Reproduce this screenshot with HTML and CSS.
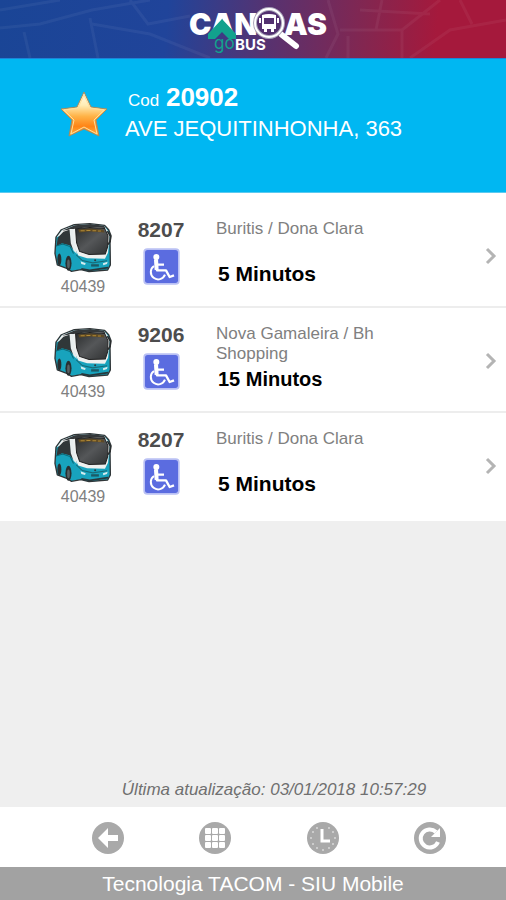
FILE: index.html
```
<!DOCTYPE html>
<html lang="pt-BR">
<head>
<meta charset="utf-8">
<meta name="viewport" content="width=device-width, initial-scale=1">
<title>Canoas goBus</title>
<link rel="stylesheet" href="styles.css">
</head>
<body>
<svg class="defs" aria-hidden="true">
  <defs>
    <linearGradient id="glass" x1="0" y1="0" x2="1" y2="1">
      <stop offset="0" stop-color="#292b2c"/>
      <stop offset=".5" stop-color="#555759"/>
      <stop offset="1" stop-color="#303233"/>
    </linearGradient>
    <symbol id="bus" viewBox="0 0 168 148">
      <path d="M4 42 20 20 58 5 104 2 148 7 160 20 167 38 164 58 165 124 157 139 102 144 78 138 50 143 36 134 8 124 1 90Z" fill="#18a3bd" stroke="#303638" stroke-width="4" stroke-linejoin="round"/>
      <path d="M6 42 22 21 60 7 104 4 147 9 157 22 163 40 161 60 158 88 149 106 96 104 70 96 58 70 52 28 24 34Z" fill="#eef0ef"/>
      <path d="M9 44 26 26 50 18 52 58 60 84 44 66 22 60 6 68Z" fill="#303739"/>
      <path d="M22 23 60 7 106 3 146 8 151 15 104 12 61 17Z" fill="#34383a"/>
      <path d="M44 18 54 18 58 58 66 92 56 82 48 60Z" fill="#e9eeee"/>
      <path d="M62 17 104 13 148 16 158 38 157 70 150 92 102 93 74 84 65 58Z" fill="url(#glass)" stroke="#222" stroke-width="3"/>
      <path d="M70 19 104 16 145 20 148 28 104 25 73 28Z" fill="#5d4925"/>
      <path d="M77 23h12m5-1h12m6 1h11m5 1h9" stroke="#b28a36" stroke-width="3"/>
      <path d="M64 94 82 111 113 118 155 112" fill="none" stroke="#176b79" stroke-width="3"/>
      <path d="M156 24 165 39 164 55 158 64" fill="none" stroke="#292d2e" stroke-width="5"/>
      <path d="M4 68 24 62 46 70 56 90" fill="none" stroke="#0b6978" stroke-width="3"/>
      <ellipse cx="41" cy="119" rx="9" ry="22" fill="#292f31"/>
      <ellipse cx="41" cy="121" rx="4" ry="13" fill="#596164"/>
      <ellipse cx="14" cy="108" rx="6" ry="18" fill="#292f31"/>
      <path d="M77 113 92 119 90 124 79 121ZM143 119 157 115 155 121 144 125Z" fill="#d6ecee"/>
      <path d="M108 122h23v7h-23z" fill="#1b5965"/>
      <path d="M79 136 104 140 158 132" fill="none" stroke="#28383c" stroke-width="5"/>
      <circle cx="120" cy="110" r="3" fill="#30393b"/>
    </symbol>
    <symbol id="wheelchair" viewBox="0 0 111 111">
      <rect x="1" y="1" width="109" height="109" rx="12" fill="#b9c0f4"/>
      <rect x="6" y="6" width="99" height="99" rx="8" fill="#5b6ce0"/>
      <circle cx="40" cy="27" r="9" fill="#fff"/>
      <path d="M39 34 42 67H69L80 87 93 82M41 50H63" fill="none" stroke="#fff" stroke-width="7" stroke-linejoin="round"/>
      <path d="M39 34 41 66" stroke="#fff" stroke-width="12"/>
      <path d="M33 54A22 22 0 1 0 66 80" fill="none" stroke="#fff" stroke-width="6"/>
    </symbol>
    <symbol id="chevron" viewBox="0 0 12 18">
      <path d="M2 2 9 9 2 16" fill="none" stroke="#b4b4b4" stroke-width="3"/>
    </symbol>
  </defs>
</svg>

<header class="brand">
  <svg class="brand-map" viewBox="0 0 506 58" preserveAspectRatio="none" aria-hidden="true">
    <g fill="none" stroke="#fff" stroke-opacity=".05" stroke-width="3">
      <path d="M0 28 40 24 92 10 150 0M90 18 98 58M92 24 150 34 210 58M130 0 148 24 190 16M24 32 30 58M0 10 60 0"/>
      <path d="M328 0 338 34 326 58M340 30H402V58M348 58V36M382 0 376 30M402 30 440 0M410 58 450 30 506 20M460 0 472 24M360 10 430 14"/>
    </g>
  </svg>
  <svg class="logo" viewBox="0 0 160 58" role="img" aria-label="Canoas goBUS">
    <g class="logo-name">
      <text x="9" y="35">CAN</text>
      <text x="104" y="35">AS</text>
    </g>
    <path d="M42 19 56 34V39H49L42 32 35 39H28V34Z" fill="#12a28d"/>
    <path d="M102 35 116 46" stroke="#fff" stroke-width="6" stroke-linecap="round"/>
    <circle cx="89" cy="23" r="14" fill="#52306f" stroke="#a9a4b9" stroke-width="4"/>
    <circle cx="89" cy="23" r="14" fill="none" stroke="#fff" stroke-width="2"/>
    <path d="M82 15Q89 13 96 15V29H94V32H91V29H87V32H84V29H82ZM84 18V24H94V18ZM79 18H81V23H79ZM97 18H99V23H97Z" fill="#fff" fill-rule="evenodd"/>
    <text class="logo-go" x="34" y="49">go</text>
    <text class="logo-bus" x="55" y="50">BUS</text>
  </svg>
</header>

<section class="stop">
  <svg class="star" viewBox="0 0 48 46" aria-hidden="true">
    <defs>
      <linearGradient id="gold" x1="0" y1="0" x2="0" y2="1">
        <stop offset="0" stop-color="#fffdf0"/>
        <stop offset=".3" stop-color="#ffedb5"/>
        <stop offset=".55" stop-color="#ffb347"/>
        <stop offset=".78" stop-color="#ff8416"/>
        <stop offset="1" stop-color="#ffb442"/>
      </linearGradient>
    </defs>
    <path d="M24 1 31 16 47 18 36 29 39 45 24 38 9 45 12 29 1 18 17 16Z" fill="url(#gold)" stroke="#a98a5c" stroke-width="1" stroke-linejoin="round"/>
    <path d="M24 4 30 17 44 19 34 29 37 43 24 36 11 43 14 29 4 19 18 17Z" fill="none" stroke="#ffdf9b" stroke-width="1"/>
  </svg>
  <div class="stop-text">
    <p class="stop-code">Cod <strong>20902</strong></p>
    <h1 class="stop-name">AVE JEQUITINHONHA, 363</h1>
  </div>
</section>

<main class="content">
  <ul class="arrivals">
    <li>
      <a class="arrival" href="#linha-1">
        <span class="vehicle"><svg class="bus" aria-hidden="true"><use href="#bus"/></svg><span>40439</span></span>
        <span class="route"><strong>8207</strong><svg class="access" aria-hidden="true"><use href="#wheelchair"/></svg></span>
        <span class="trip"><span class="destination">Buritis / Dona Clara</span><strong>5 Minutos</strong></span>
        <svg class="chevron" aria-hidden="true"><use href="#chevron"/></svg>
      </a>
    </li>
    <li>
      <a class="arrival" href="#linha-2">
        <span class="vehicle"><svg class="bus" aria-hidden="true"><use href="#bus"/></svg><span>40439</span></span>
        <span class="route"><strong>9206</strong><svg class="access" aria-hidden="true"><use href="#wheelchair"/></svg></span>
        <span class="trip trip-long"><span class="destination">Nova Gamaleira / Bh Shopping</span><strong>15 Minutos</strong></span>
        <svg class="chevron" aria-hidden="true"><use href="#chevron"/></svg>
      </a>
    </li>
    <li>
      <a class="arrival" href="#linha-3">
        <span class="vehicle"><svg class="bus" aria-hidden="true"><use href="#bus"/></svg><span>40439</span></span>
        <span class="route"><strong>8207</strong><svg class="access" aria-hidden="true"><use href="#wheelchair"/></svg></span>
        <span class="trip"><span class="destination">Buritis / Dona Clara</span><strong>5 Minutos</strong></span>
        <svg class="chevron" aria-hidden="true"><use href="#chevron"/></svg>
      </a>
    </li>
  </ul>
  <p class="updated">Última atualização: 03/01/2018 10:57:29</p>
</main>

<nav class="toolbar">
  <button type="button" aria-label="Voltar">
    <svg viewBox="0 0 32 32"><circle cx="16" cy="16" r="16" fill="#a9a9a9"/><path d="M6 16 16 6V13H26V19H16V26Z" fill="#fff"/></svg>
  </button>
  <button type="button" aria-label="Menu">
    <svg viewBox="0 0 32 32"><circle cx="16" cy="16" r="16" fill="#a9a9a9"/><g fill="#fff"><rect x="6" y="6" width="6" height="6" rx="1"/><rect x="13" y="6" width="6" height="6" rx="1"/><rect x="20" y="6" width="6" height="6" rx="1"/><rect x="6" y="13" width="6" height="6" rx="1"/><rect x="13" y="13" width="6" height="6" rx="1"/><rect x="20" y="13" width="6" height="6" rx="1"/><rect x="6" y="20" width="6" height="6" rx="1"/><rect x="13" y="20" width="6" height="6" rx="1"/><rect x="20" y="20" width="6" height="6" rx="1"/></g></svg>
  </button>
  <button type="button" aria-label="Horários">
    <svg viewBox="0 0 32 32"><circle cx="16" cy="16" r="16" fill="#a9a9a9"/><path d="M15 7V19H23" fill="none" stroke="#fff" stroke-width="3"/><g fill="#d8d8d8"><circle cx="4" cy="16" r="1"/><circle cx="28" cy="16" r="1"/><circle cx="16" cy="28" r="1"/><circle cx="6" cy="10" r="1"/><circle cx="10" cy="6" r="1"/><circle cx="22" cy="6" r="1"/><circle cx="26" cy="10" r="1"/><circle cx="6" cy="22" r="1"/><circle cx="10" cy="26" r="1"/><circle cx="22" cy="26" r="1"/><circle cx="26" cy="22" r="1"/></g></svg>
  </button>
  <button type="button" aria-label="Atualizar">
    <svg viewBox="0 0 32 32"><circle cx="16" cy="16" r="16" fill="#a9a9a9"/><path d="M22 10A9 9 0 1 0 24 20" fill="none" stroke="#fff" stroke-width="4"/><path d="M26 6V15H17Z" fill="#fff"/></svg>
  </button>
</nav>
<footer class="credit">Tecnologia TACOM - SIU Mobile</footer>
</body>
</html>
```
FILE: styles.css
```
* { box-sizing: border-box; }

body {
  margin: 0;
  min-height: 100vh;
  display: flex;
  flex-direction: column;
  background: #efefef;
  font-family: "Liberation Sans", Arial, sans-serif;
}

p, h1, ul { margin: 0; padding: 0; }
svg { display: block; }
.defs { position: absolute; width: 0; height: 0; }

.brand {
  position: relative;
  height: 59px;
  display: flex;
  justify-content: center;
  padding-left: 14px;
  border-bottom: 1px solid #1c84d8;
  background: linear-gradient(95deg, #1a4596 0%, #20449a 33%, #573270 53%, #832650 72%, #a5193c 86%, #a5193c 100%);
}
.brand-map { position: absolute; inset: 0; width: 100%; height: 100%; }
.logo { position: relative; width: 160px; height: 58px; }
.logo-name { fill: #fff; font: 900 30px Inter, sans-serif; }
.logo-go { fill: #12a28d; font: 400 17px Inter, sans-serif; }
.logo-bus { fill: #fff; font: 700 15px Inter, sans-serif; }

.stop {
  display: flex;
  align-items: flex-start;
  gap: 17px;
  min-height: 134px;
  padding: 22px 16px 0 60px;
  background: #00b7f2;
  border-bottom: 1px solid #5ccaf0;
  color: #fff;
}
.star { width: 48px; height: 46px; margin-top: 10px; flex: none; }
.stop-code { padding-left: 3px; font-size: 17px; line-height: 32px; }
.stop-code strong { padding-left: 2px; font-size: 26px; }
.stop-name { font-size: 22px; font-weight: 400; line-height: 24px; }

.content { flex: 1; display: flex; flex-direction: column; }
.arrivals { list-style: none; padding: 10px 0 5px; background: #fff; }
.arrivals li + li { border-top: 2px solid #ededed; }
.arrival {
  display: grid;
  grid-template-columns: 58px 50px 1fr 12px;
  min-height: 103px;
  padding: 15px 9px 0 54px;
  color: #808080;
  text-decoration: none;
}
.vehicle, .route { display: flex; flex-direction: column; align-items: center; }
.vehicle { font-size: 16px; line-height: 18px; }
.bus { width: 58px; height: 50px; margin: 5px 0; }
.route { margin-left: 24px; margin-right: -24px; }
.route strong { color: #4d4d4d; font-size: 21px; line-height: 24px; }
.access { width: 37px; height: 37px; margin-top: 6px; }
.trip { display: flex; flex-direction: column; margin: 1px 0 0 54px; }
.destination { max-width: 180px; min-height: 40px; font-size: 17px; line-height: 20px; }
.trip strong { padding-left: 2px; color: #000; font-size: 21px; line-height: 30px; }
.trip-long strong { font-size: 20px; }
.chevron { width: 12px; height: 18px; margin-top: 29px; }

.updated {
  margin-top: auto;
  padding: 0 16px 7px 58px;
  color: #707070;
  font-size: 17px;
  font-style: italic;
  line-height: 20px;
  text-align: center;
}

.toolbar {
  display: grid;
  grid-template-columns: repeat(4, 1fr);
  justify-items: center;
  align-items: center;
  height: 60px;
  padding: 2px 22px 0 54px;
  background: #fff;
}
.toolbar button { padding: 0; border: 0; background: none; cursor: pointer; }
.toolbar svg { width: 32px; height: 32px; }

.credit {
  background: #a2a2a2;
  color: #fff;
  font-size: 21px;
  line-height: 33px;
  text-align: center;
}
```
